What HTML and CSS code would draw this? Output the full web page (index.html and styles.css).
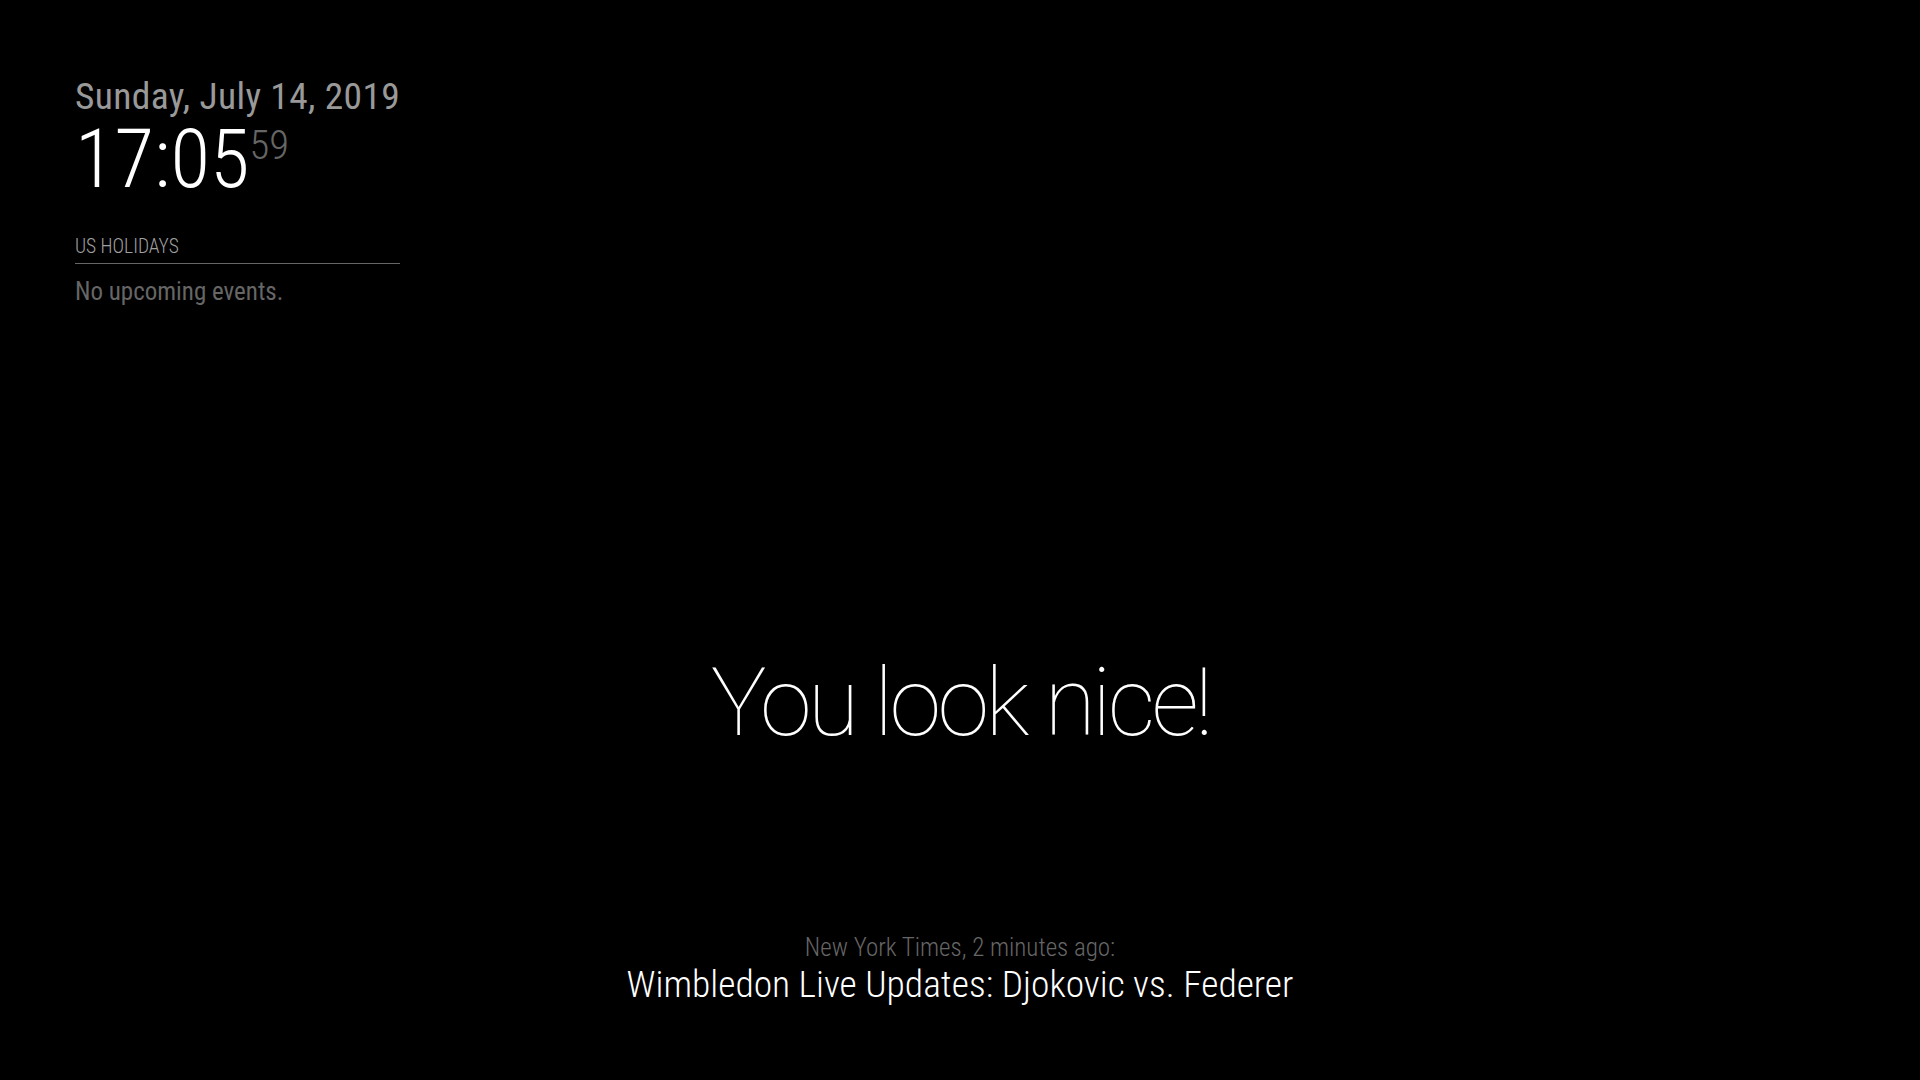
FILE: index.html
```html
<!DOCTYPE html>
<html lang="en">
<head>
<meta charset="utf-8">
<title>MagicMirror</title>
<link rel="stylesheet" href="styles.css">
</head>
<body>
<div class="screen">
  <div class="top-left">
    <div class="module clock">
      <div class="date normal medium">Sunday, July 14, 2019</div>
      <div class="time bright large light">17:05<sup class="dimmed seconds">59</sup></div>
    </div>
    <div class="module calendar">
      <header class="module-header">US Holidays</header>
      <div class="dimmed regular small">No upcoming events.</div>
    </div>
  </div>
  <div class="lower-third">
    <div class="compliment thin xlarge bright">You look nice!</div>
  </div>
  <div class="bottom-bar">
    <div class="newsfeed-source light small dimmed">New York Times, 2 minutes ago:</div>
    <div class="newsfeed-title bright medium light">Wimbledon Live Updates: Djokovic vs. Federer</div>
  </div>
</div>
</body>
</html>
```
FILE: styles.css
```css
html, body {
  margin: 0;
  padding: 0;
  background: #000;
}
body {
  font-family: "Roboto Condensed", Roboto, sans-serif;
  font-weight: 400;
  color: #aaa;
}
.screen {
  width: 1920px;
  height: 1080px;
  box-sizing: border-box;
  padding: 75px 75px 73px;
  display: flex;
  flex-direction: column;
}
.top-left {
  width: 325px;
}
.module {
  margin-bottom: 37.5px;
}
.module.calendar {
  margin-bottom: 0;
}
.dimmed { color: #666; }
.normal { color: #999; }
.bright { color: #fff; }
.light { font-weight: 300; }
.regular { font-weight: 400; }
.thin { font-family: Roboto, sans-serif; font-weight: 100; }
.small { font-size: 25px; line-height: 31.25px; }
.medium { font-size: 37.5px; line-height: 43.75px; }
.large { font-size: 81.25px; line-height: 81.25px; }
.xlarge { font-size: 93.75px; line-height: 93.75px; letter-spacing: -3.75px; }
.date { font-weight: 400; letter-spacing: 0.35px; white-space: nowrap; }
.time { font-weight: 300; white-space: nowrap; }
.seconds {
  font-size: 50%;
  line-height: 50%;
  vertical-align: super;
}
.module-header {
  text-transform: uppercase;
  font-size: 19.5px;
  line-height: 18.75px;
  font-weight: 300;
  color: #a0a0a0;
  border-bottom: 1px solid #666;
  padding-bottom: 6.25px;
  margin-bottom: 12.5px;
}
.lower-third {
  margin-top: 350px;
  text-align: center;
}
.bottom-bar {
  margin-top: auto;
  text-align: center;
}
```
